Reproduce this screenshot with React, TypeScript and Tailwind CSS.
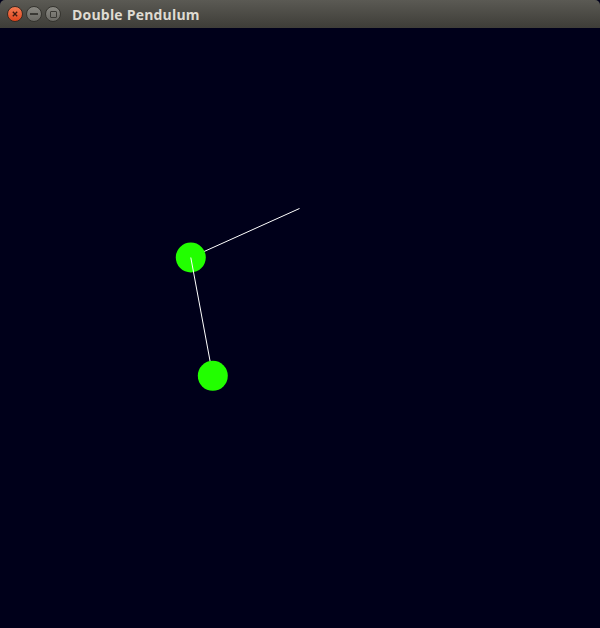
import React from 'react';

// pendulum state, in page coordinates
const pivot = { x: 299.5, y: 208.5 };
const bob1 = { x: 190.8, y: 257.5 };
const bob2 = { x: 212.8, y: 375.8 };
const TOP = 28;

const App: React.FC = () => {
  return (
    <div className="w-[600px] h-[628px] flex flex-col bg-[#00001a] overflow-hidden">
      {/* Title bar */}
      <div className="h-[28px] shrink-0 flex items-center bg-gradient-to-b from-[#5b5a54] to-[#3e3d38] rounded-t-[5px]">
        <div className="flex items-center gap-[3px] pl-[7px]">
          <div className="w-[16px] h-[16px] rounded-full bg-gradient-to-b from-[#f27b52] to-[#e0441a] border border-[#3a2a22] flex items-center justify-center">
            <svg width="6" height="6" viewBox="0 0 6 6">
              <path d="M0.8 0.8 L5.2 5.2 M5.2 0.8 L0.8 5.2" stroke="#3b1a10" strokeWidth="1.3" />
            </svg>
          </div>
          <div className="w-[16px] h-[16px] rounded-full bg-gradient-to-b from-[#8a8983] to-[#6a6964] border border-[#35342f] flex items-center justify-center">
            <div className="w-[8px] h-[2px] bg-[#3a3935]" />
          </div>
          <div className="w-[16px] h-[16px] rounded-full bg-gradient-to-b from-[#8a8983] to-[#6a6964] border border-[#35342f] flex items-center justify-center">
            <div className="w-[7px] h-[7px] border border-[#3a3935] rounded-[1px]" />
          </div>
        </div>
        <span
          className="ml-[11px] text-[14px] font-bold text-[#dfdbd2] tracking-[0.2px]"
          style={{ fontFamily: "'Open Sans', 'DejaVu Sans', sans-serif" }}
        >
          Double Pendulum
        </span>
      </div>

      {/* Canvas */}
      <div className="flex-1">
        <svg width="600" height="600" viewBox={`0 ${TOP} 600 600`} className="block">
          <line x1={pivot.x} y1={pivot.y} x2={bob1.x} y2={bob1.y} stroke="#ffffff" strokeWidth="1" />
          <circle cx={bob1.x} cy={bob1.y} r="15" fill="#22ff00" />
          <line x1={bob1.x} y1={bob1.y} x2={bob2.x} y2={bob2.y} stroke="#ffffff" strokeWidth="1" />
          <circle cx={bob2.x} cy={bob2.y} r="15" fill="#22ff00" />
        </svg>
      </div>
    </div>
  );
};

export default App;
